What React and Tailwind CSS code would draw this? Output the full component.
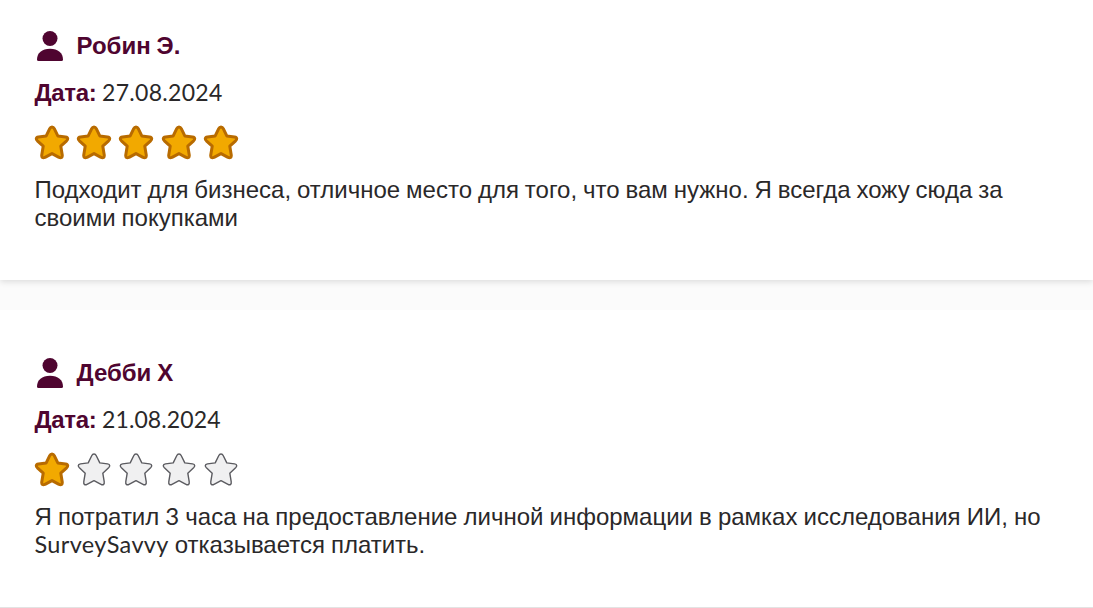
const STAR_PATH =
  'M18 3Q19.5 3 20.3 4.7L23.8 11.9L31.5 12.9Q33.6 13.2 33.7 14.6Q33.8 15.6 32.6 16.8L26.8 22.2L28.2 30.7Q28.5 32.8 27.6 33.4Q26.6 34.2 25 33.3L18 29.6L11 33.3Q9.4 34.2 8.4 33.4Q7.5 32.8 7.8 30.7L9.2 22.2L3.4 16.8Q2.2 15.6 2.3 14.6Q2.4 13.2 4.5 12.9L12.2 11.9L15.7 4.7Q16.5 3 18 3Z';

function Star({ filled }) {
  return (
    <svg viewBox="0 0 36 36" className="h-9 w-9 shrink-0">
      <path
        d={STAR_PATH}
        fill={filled ? '#f2a900' : '#f0f0f1'}
        stroke={filled ? '#b86b00' : '#5b5b60'}
        strokeWidth={filled ? 3 : 1.4}
        strokeLinejoin="round"
      />
    </svg>
  );
}

function Person() {
  return (
    <svg viewBox="0 0 26 30" className="h-[30px] w-[26px] shrink-0" fill="#4f0530">
      <circle cx="13" cy="7.5" r="7.5" />
      <path d="M0 28.5C0 22 5 17.7 13 17.7S26 22 26 28.5Q26 30 24.5 30H1.5Q0 30 0 28.5Z" />
    </svg>
  );
}

const reviews = [
  {
    name: 'Робин Э.',
    date: '27.08.2024',
    dateTracking: 'tracking-[0.3px]',
    rating: 5,
    text: (
      <>
        <span className="block">
          Подходит для бизнеса, отличное место для того, что вам нужно. Я всегда хожу сюда за
        </span>
        <span className="block">своими покупками</span>
      </>
    ),
    frame: 'h-[280px] pt-[30px] shadow-[0_2px_6px_rgba(0,0,0,0.12)]',
  },
  {
    name: 'Дебби Х',
    date: '21.08.2024',
    dateTracking: 'tracking-[0.1px]',
    rating: 1,
    text: (
      <>
        <span className="block [word-spacing:-0.6px]">
          Я потратил <span className="font-[Lato] leading-none">3</span> часа на предоставление личной информации в рамках исследования ИИ, но
        </span>
        <span className="block">
          <span className="font-[Lato] text-[23.5px] leading-none tracking-[0.35px]">SurveySavvy</span> отказывается платить.
        </span>
      </>
    ),
    frame: 'h-[298px] pt-[47px] border-b border-[#e3e3e3]',
  },
];

function Review({ name, date, dateTracking, rating, text, frame }) {
  return (
    <article className={`bg-white pl-[34.5px] ${frame}`}>
      <header className="flex h-8 items-center gap-[13.5px] pl-[2.5px]">
        <Person />
        <h2 className="text-[24px] leading-8 font-bold text-[#4f0530] [word-spacing:-0.7px]">{name}</h2>
      </header>
      <p className="mt-4 h-[30px] text-[24px] leading-[30px] [word-spacing:-1.2px]">
        <span className="font-bold tracking-[-0.3px] text-[#4f0530]">Дата:</span>{' '}
        <span className={`font-[Lato] text-[23px] leading-none ${dateTracking}`}>{date}</span>
      </p>
      <div className="-ml-[0.5px] mt-4 flex gap-[6.2px]">
        {[1, 2, 3, 4, 5].map((n) => (
          <Star key={n} filled={n <= rating} />
        ))}
      </div>
      <p className="mt-4 text-[24px] leading-7 whitespace-nowrap [word-spacing:-0.76px]">{text}</p>
    </article>
  );
}

export default function App() {
  return (
    <main className="flex h-[608px] flex-col gap-[30px] overflow-hidden bg-[#fbfbfb] font-['Liberation_Sans',Arial,sans-serif] text-[#2a2829]">
      {reviews.map((review) => (
        <Review key={review.name} {...review} />
      ))}
    </main>
  );
}
